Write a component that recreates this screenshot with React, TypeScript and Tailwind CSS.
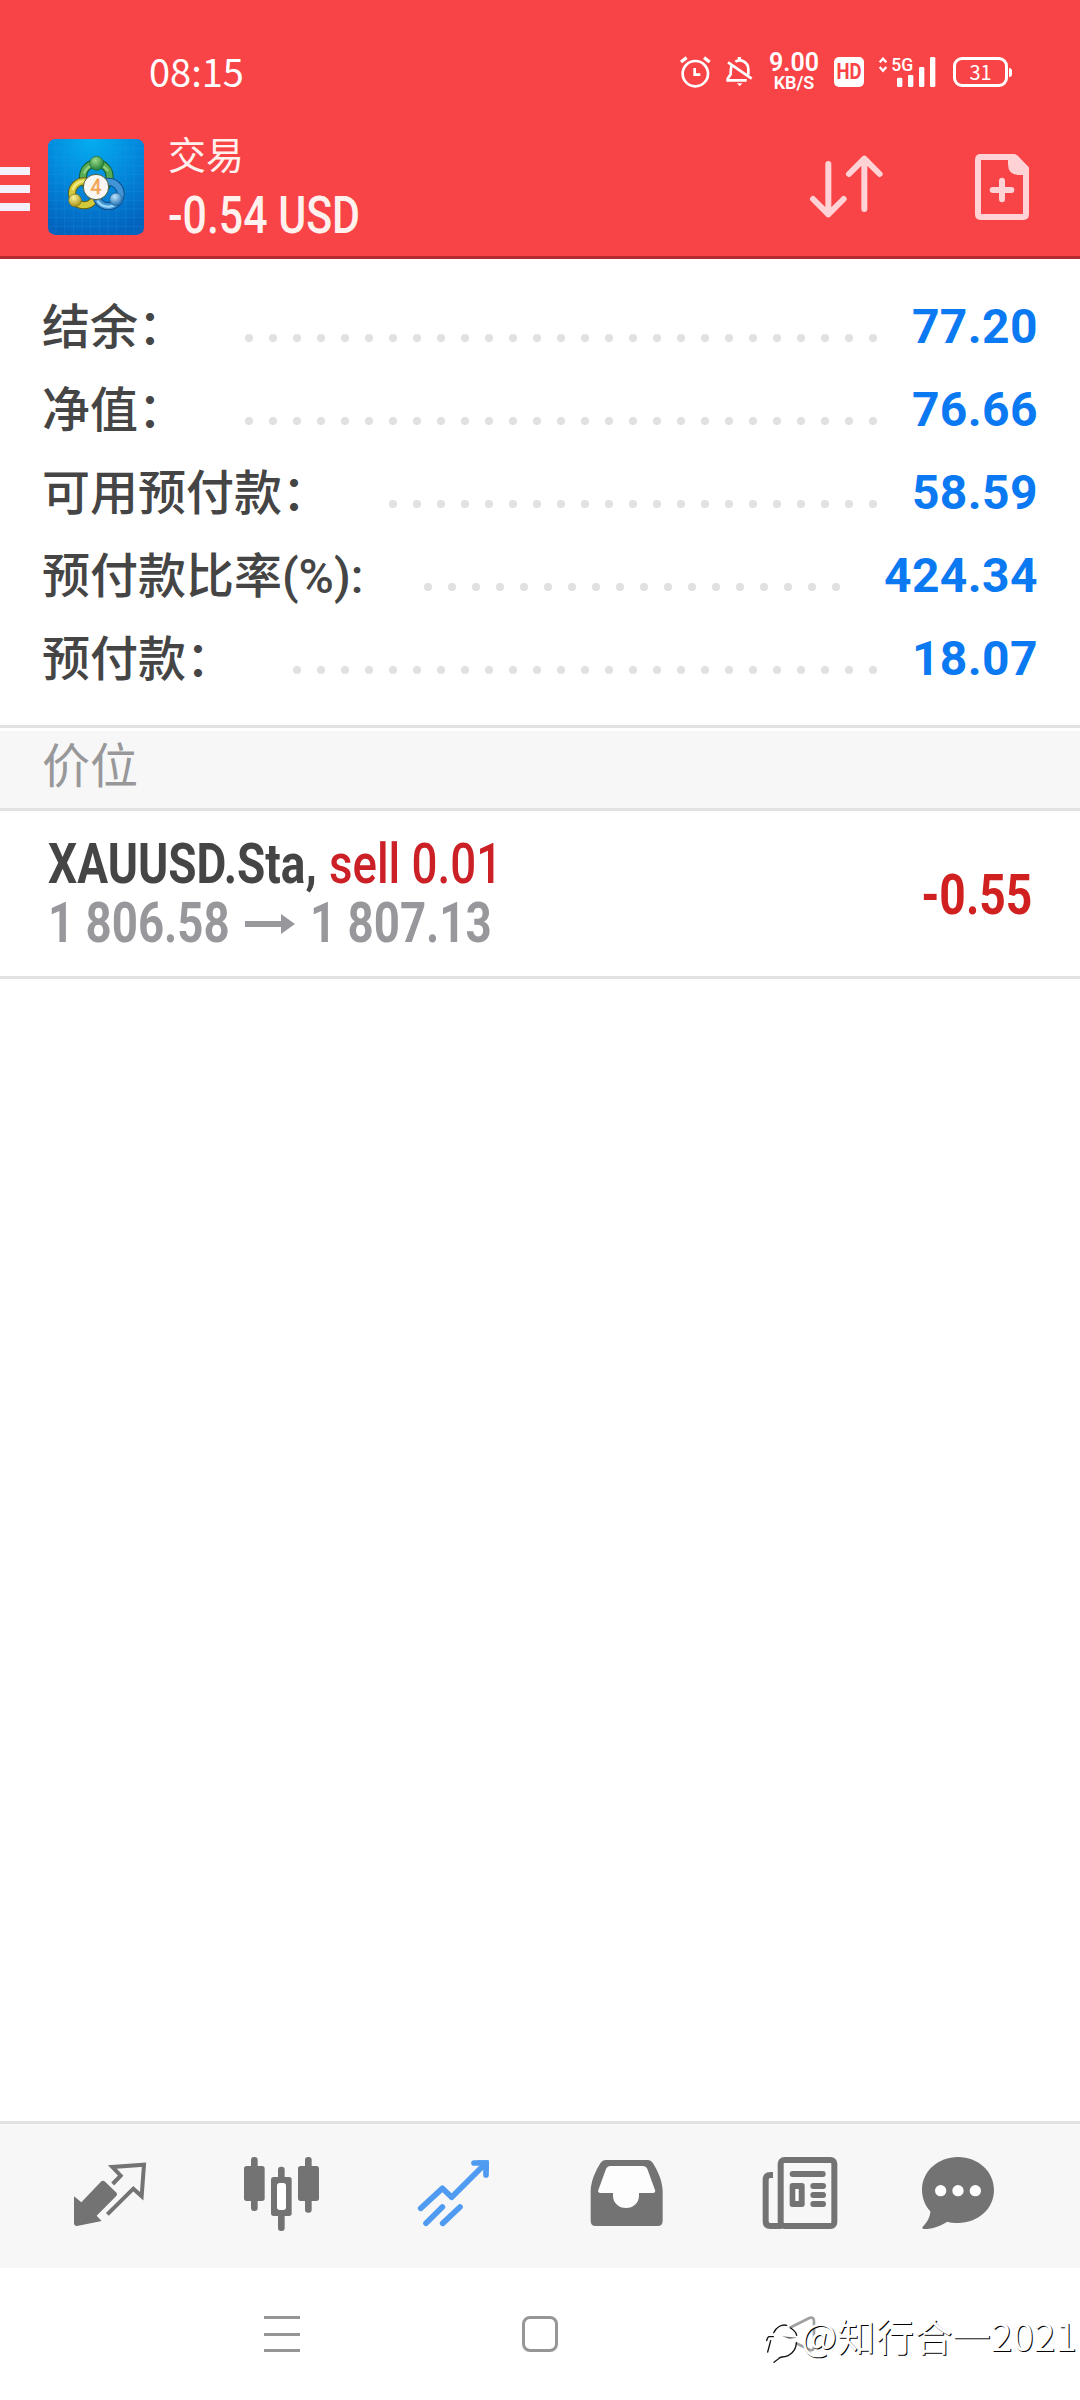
import type { ReactNode } from 'react';

interface SummaryRow {
  label: string;
  value: string;
  dots: number;
  gap: string;
}

const summary: SummaryRow[] = [
  { label: '结余：', value: '77.20', dots: 27, gap: 'mr-[35px]' },
  { label: '净值：', value: '76.66', dots: 27, gap: 'mr-[35px]' },
  { label: '可用预付款：', value: '58.59', dots: 21, gap: 'mr-[35px]' },
  { label: '预付款比率(%):', value: '424.34', dots: 18, gap: 'mr-[44px]' },
  { label: '预付款：', value: '18.07', dots: 25, gap: 'mr-[35px]' },
];

function StatusBar() {
  return (
    <div className="flex items-center h-[116px] pt-7 pl-[149px] text-white">
      <span className="w-[530px] pb-[3px] text-[38px] leading-none font-['Noto_Sans_CJK_SC',sans-serif] font-normal">08:15</span>

      {/* Alarm */}
      <svg width="32" height="32" viewBox="0 0 96 96" fill="none" stroke="currentColor" strokeWidth="8">
        <circle cx="49" cy="53" r="38" />
        <path d="M47 36v20h17" />
        <path d="M6 18L23 5M92 18L75 5" strokeWidth="10" />
      </svg>

      {/* Muted bell */}
      <svg className="ml-[15px]" width="28" height="32" viewBox="0 0 84 96" fill="none" stroke="currentColor" strokeWidth="8">
        <path d="M17 29C14 35 14 42 14 55L5 68V73H62" />
        <path d="M28 17C44 7 67 18 67 40V56" />
        <path d="M6 19L77 68" />
        <path d="M40 3v8" strokeWidth="10" />
        <path d="M33 82h16l-8 9z" fill="currentColor" stroke="none" />
      </svg>

      {/* Network speed */}
      <div className="ml-[14px] w-[52px] flex flex-col items-center font-['Roboto',sans-serif] whitespace-nowrap">
        <span className="text-[25px] leading-[20px] font-semibold">9.00</span>
        <span className="text-[18px] leading-[19px] font-semibold">KB/S</span>
      </div>

      <div className="ml-[14px] w-[30px] h-[30px] rounded-[5px] bg-white text-[#f94447] flex items-center justify-center font-['Roboto',sans-serif] font-bold text-[22px] leading-none">
        <span className="inline-block scale-x-[.84]">HD</span>
      </div>

      {/* Signal */}
      <svg className="ml-[14px] overflow-visible" width="60" height="32" viewBox="0 0 180 96">
        <path d="M5 19L15 8L25 19M5 33L15 44L25 33" fill="none" stroke="currentColor" strokeWidth="7" />
        <text x="40" y="46" fontSize="57" fontFamily="Roboto, sans-serif" fontWeight="500" fill="currentColor" textLength="66" lengthAdjust="spacingAndGlyphs">5G</text>
        <rect x="57" y="65" width="16" height="28" rx="4" fill="currentColor" />
        <rect x="90" y="57" width="16" height="36" rx="4" fill="currentColor" />
        <rect x="123" y="33" width="16" height="60" rx="4" fill="currentColor" />
        <rect x="156" y="3" width="16" height="90" rx="4" fill="currentColor" />
      </svg>

      {/* Battery */}
      <div className="ml-[15px] w-[55px] h-[30px] rounded-[9px] border-3 border-white flex items-center justify-center font-['Noto_Sans_CJK_SC',sans-serif] font-normal text-[20px] leading-none">
        31
      </div>
      <div className="ml-px w-[3px] h-[9px] rounded-r bg-white" />
    </div>
  );
}

function AppLogo() {
  return (
    <svg className="mt-[2px]" width="96" height="96" viewBox="0 0 288 288">
      <defs>
        <radialGradient id="bg" cx="0.45" cy="0" r="1">
          <stop offset="0" stopColor="#04aef0" />
          <stop offset="0.5" stopColor="#0388dc" />
          <stop offset="1" stopColor="#0363bd" />
        </radialGradient>
        <radialGradient id="green" cx="0.4" cy="0.3" r="0.7">
          <stop offset="0" stopColor="#9cdb8a" />
          <stop offset="1" stopColor="#1f7f35" />
        </radialGradient>
        <radialGradient id="yellow" cx="0.4" cy="0.3" r="0.7">
          <stop offset="0" stopColor="#fbf3a0" />
          <stop offset="1" stopColor="#a99416" />
        </radialGradient>
        <radialGradient id="blue" cx="0.4" cy="0.3" r="0.7">
          <stop offset="0" stopColor="#bfe6fb" />
          <stop offset="1" stopColor="#2170b4" />
        </radialGradient>
      </defs>
      <rect width="288" height="288" rx="22" fill="url(#bg)" />
      <path
        d="M24 0v288M50 0v288M76 0v288M102 0v288M128 0v288M154 0v288M180 0v288M206 0v288M232 0v288M258 0v288M0 28h288M0 54h288M0 80h288M0 106h288M0 132h288M0 158h288M0 184h288M0 210h288M0 236h288M0 262h288"
        stroke="#2aa5ea"
        strokeOpacity="0.3"
        strokeWidth="2"
      />
      <g fill="none">
        <circle cx="145" cy="113" r="40" stroke="#14592b" strokeWidth="24" />
        <circle cx="145" cy="113" r="40" stroke="#58ad54" strokeWidth="18" />
        <path d="M108 104a40 40 0 0 1 72 -8" stroke="#93d07f" strokeWidth="7" />
        <circle cx="108" cy="163" r="36" stroke="#646014" strokeWidth="24" />
        <circle cx="108" cy="163" r="36" stroke="#d3c93c" strokeWidth="18" />
        <path d="M74 154a36 36 0 0 1 50 -24" stroke="#f0ea7e" strokeWidth="7" />
        <circle cx="181" cy="165" r="37" stroke="#114d86" strokeWidth="24" />
        <circle cx="181" cy="165" r="37" stroke="#4195d6" strokeWidth="18" />
        <path d="M148 185a38 38 0 0 0 62 4" stroke="#9ad4f6" strokeWidth="7" />
      </g>
      <circle cx="146" cy="73" r="21" fill="url(#green)" stroke="#1b6630" strokeWidth="2" />
      <circle cx="81" cy="184" r="19" fill="url(#yellow)" stroke="#77701a" strokeWidth="2" />
      <circle cx="204" cy="181" r="19" fill="url(#blue)" stroke="#1c5f9c" strokeWidth="2" />
      <circle cx="144" cy="144" r="38" fill="#f9f7f3" stroke="#4c5b3b" strokeWidth="3" />
      <text x="144" y="165" textAnchor="middle" fontSize="58" fontFamily="Roboto, sans-serif" fill="#f6ad64" stroke="#f09a45" strokeWidth="1.5">4</text>
    </svg>
  );
}

function Header() {
  return (
    <div className="flex items-center h-[140px]">
      <div className="flex flex-col gap-[10px] pt-1.5 w-[30px] mr-[18px]">
        <div className="h-2 bg-[#f3f0fb]" />
        <div className="h-2 bg-[#f3f0fb]" />
        <div className="h-2 bg-[#f3f0fb]" />
      </div>
      <AppLogo />
      <div className="ml-6 w-[640px] flex flex-col text-[#fff1ee] whitespace-nowrap font-['Roboto','Noto_Sans_CJK_SC',sans-serif]">
        <span className="text-[38px] leading-[60px]">交易</span>
        <span className="text-[51px] leading-[60px] font-medium">
          <span className="inline-block origin-left scale-x-[.84]">-0.54 USD</span>
        </span>
      </div>

      {/* Sort */}
      <svg className="ml-px mb-[3px] shrink-0" width="76" height="66" viewBox="506 366 228 198" fill="none" stroke="#ffd2d5" strokeWidth="18" strokeLinecap="round" strokeLinejoin="round">
        <path d="M564 402V553M518 507L564 553L610 507" />
        <path d="M672 537V386M626 432L672 386L718 432" />
      </svg>

      {/* New order */}
      <svg className="ml-[89px] mt-[2px] shrink-0" width="56" height="68" viewBox="1002 369 168 204" fill="none" stroke="#ffd2d5" strokeWidth="18">
        <path d="M1022 381H1123L1158 416V553Q1158 561 1150 561H1022Q1014 561 1014 553V389Q1014 381 1022 381Z" strokeLinejoin="round" />
        <path d="M1104 381V402Q1104 435 1137 435H1165V412L1132 376Z" fill="#ffd2d5" stroke="none" />
        <path d="M1086 452V508M1058 480H1114" strokeLinecap="round" />
      </svg>
    </div>
  );
}

function Summary() {
  return (
    <div className="pt-[26px] pb-[25px] pl-[42px] pr-[42px]">
      {summary.map((row) => (
        <div key={row.label} className="flex items-center h-[83px] text-[48px] leading-[83px] whitespace-nowrap">
          <span className="flex-1 pt-[2px] font-medium text-[#454545]">{row.label}</span>
          <div className={`flex gap-4 pt-[22px] ${row.gap}`}>
            {Array.from({ length: row.dots }, (_, i) => (
              <span key={i} className="w-2 h-2 rounded-full bg-[#e1e1e1]" />
            ))}
          </div>
          <span className="font-bold tracking-[0.4px] text-[#0b79f2]">{row.value}</span>
        </div>
      ))}
    </div>
  );
}

function Position() {
  return (
    <div className="flex h-[168px] border-b-3 border-[#e2e2e2] pl-12 pr-12 whitespace-nowrap">
      <div className="flex-1 pt-6 text-[55px] leading-[59px]">
        <div className="flex">
          <span className="w-[281px]">
            <span className="inline-block origin-left scale-x-[.835] font-bold text-[#454545]">XAUUSD.Sta,</span>
          </span>
          <span className="inline-block origin-left scale-x-[.83] font-medium text-[#ca2026]">sell 0.01</span>
        </div>
        <div className="flex items-center font-bold text-[#98989c]">
          <span className="w-[197px]">
            <span className="inline-block origin-left scale-x-[.83]">1 806.58</span>
          </span>
          <svg width="50" height="20" viewBox="0 0 50 20" fill="currentColor">
            <path d="M0 7H36V0L50 10L36 20V13H0Z" />
          </svg>
          <span className="ml-[15px] inline-block origin-left scale-x-[.83]">1 807.13</span>
        </div>
      </div>
      <span className="self-center pt-[3px] text-[55px] inline-block origin-right scale-x-[.84] font-bold text-[#d0201f]">-0.55</span>
    </div>
  );
}

function Tab({ viewBox, children, active = false }: { viewBox: string; children: ReactNode; active?: boolean }) {
  return (
    <button className={active ? 'text-[#4e9bf1]' : 'text-[#737373]'}>
      <svg width="172" height="90" viewBox={viewBox} fill="currentColor">
        {children}
      </svg>
    </button>
  );
}

function TabBar() {
  return (
    <div className="flex h-[147px] pt-[26px] pl-6 border-t-3 border-[#e2e2e2] bg-[#f7f7f7] items-start">
      {/* Quotes */}
      <Tab viewBox="-108 0 516 270">
        <path d="M42 139L64 157L122 96Q129 89 136 96L168 127Q174 133 168 139L110 197L125 213L51 228Q42 228 42 219Z" />
        <path d="M158 102L182 77L157 51L252 44L245 139L220 116L142 193" fill="none" stroke="currentColor" strokeWidth="12" />
      </Tab>
      {/* Charts */}
      <Tab viewBox="408 0 516 270">
        <rect x="573" y="21" width="20" height="162" rx="9" />
        <rect x="552" y="48" width="62" height="105" rx="8" />
        <rect x="654" y="50" width="20" height="193" rx="9" />
        <rect x="633" y="81" width="62" height="117" rx="8" />
        <rect x="651" y="99" width="27" height="81" rx="8" fill="#fff" />
        <rect x="735" y="21" width="20" height="167" rx="9" />
        <rect x="714" y="48" width="63" height="105" rx="8" />
      </Tab>
      {/* Trade */}
      <Tab viewBox="-96 0 516 270" active>
        <g fill="none" stroke="currentColor" strokeWidth="17" strokeLinecap="round">
          <path d="M62 175L127 115L155 142L252 45" strokeLinejoin="round" />
          <path d="M78 220L127 171M128 220L180 171" />
          <path d="M222 39H258V75" />
        </g>
        <path d="M232 31H260Q267 31 267 38V62L249 50Z" />
      </Tab>
      {/* History */}
      <Tab viewBox="420 0 516 270">
        <path d="M616 30H744Q753 30 758 38C774 62 788 96 788 124V213Q788 228 773 228H587Q572 228 572 213V124C572 96 586 62 602 38Q607 30 616 30Z" />
        <path d="M632 48H728Q738 48 742 57L765 120Q768 129 758 129H717V137C717 158 700 174 678 174C656 174 639 158 639 137V129H602Q592 129 595 120L618 57Q622 48 632 48Z" fill="#fdfdfd" />
      </Tab>
      {/* News */}
      <Tab viewBox="-84 0 516 270">
        <path d="M99 75H91Q77 75 77 89V214Q77 228 91 228H125" fill="none" stroke="currentColor" strokeWidth="18" />
        <rect x="122" y="30" width="161" height="198" rx="11" fill="none" stroke="currentColor" strokeWidth="18" />
        <rect x="149" y="63" width="108" height="18" rx="9" />
        <rect x="149" y="99" width="45" height="72" rx="8" />
        <rect x="166" y="117" width="10" height="36" fill="#fff" />
        <rect x="211" y="99" width="47" height="18" rx="9" />
        <rect x="211" y="126" width="47" height="18" rx="9" />
        <rect x="211" y="153" width="47" height="18" rx="9" />
      </Tab>
      {/* Chat */}
      <Tab viewBox="432 0 516 270">
        <path d="M654 21C714 21 762 64 762 120C762 176 714 219 654 219C643 219 632 218 622 215C600 229 575 238 550 237Q545 235 548 230C562 217 571 199 571 184C556 168 546 145 546 120C546 64 594 21 654 21Z" />
        <circle cx="602" cy="122" r="17" fill="#fff" />
        <circle cx="654" cy="122" r="17" fill="#fff" />
        <circle cx="706" cy="122" r="17" fill="#fff" />
      </Tab>
    </div>
  );
}

function SystemNav() {
  return (
    <div className="relative flex h-[132px] pt-12 pl-[264px]">
      <div className="w-9 h-9 flex flex-col justify-between">
        <div className="h-[3px] bg-[#969696]" />
        <div className="h-[3px] bg-[#969696]" />
        <div className="h-[3px] bg-[#969696]" />
      </div>
      <div className="ml-[222px] w-9 h-9 rounded-[8px] border-3 border-[#969696]" />

      {/* Back */}
      <svg className="ml-[208px]" width="50" height="60" viewBox="48 48 150 180" fill="none" strokeLinecap="round">
        <path d="M118 84L178 54Q192 50 192 64V140Q192 154 178 149L95 108" stroke="#a0a0a0" strokeWidth="8" />
        <path d="M60 110C70 85 90 72 110 76L122 88L140 110C140 150 120 170 100 172L74 186L52 160Z" fill="#fff" />
        <path d="M96 109L142 113L118 116Z" fill="#666" />
        <g stroke="#111" strokeWidth="4">
          <path d="M71 98C78 82 95 72 110 76" />
          <path d="M122 84C134 92 139 98 140 106" />
          <path d="M50 122Q53 109 58 110H70" />
          <path d="M62 122L53 156" />
          <path d="M139 128C138 152 120 170 96 171Q88 172 86 176L72 187" />
        </g>
      </svg>

      {/* Watermark */}
      <span
        lang="zh-CN"
        className="absolute left-[801px] top-[39px] text-[38px] leading-[56px] tracking-[0.4px] font-normal text-white whitespace-nowrap font-['Noto_Sans_CJK_SC',sans-serif] [text-shadow:1px_1px_0_#000]"
      >
        @知行合一2021
      </span>
    </div>
  );
}

export default function App() {
  return (
    <div lang="zh-CN" className="flex flex-col w-[1080px] h-[2400px] overflow-hidden bg-white font-['Roboto','Noto_Sans_CJK_SC',sans-serif]">
      <div className="bg-[#f94447] border-b-3 border-[#b52c2f]">
        <StatusBar />
        <Header />
      </div>
      <Summary />
      <div className="border-y-3 border-[#e2e2e2] h-[86px] pt-[3px]">
        <div className="h-[77px] bg-[#f7f7f7] pl-[42px] text-[48px] leading-[72px] text-[#98989a]">价位</div>
      </div>
      <Position />
      <div className="flex-1" />
      <TabBar />
      <SystemNav />
    </div>
  );
}
